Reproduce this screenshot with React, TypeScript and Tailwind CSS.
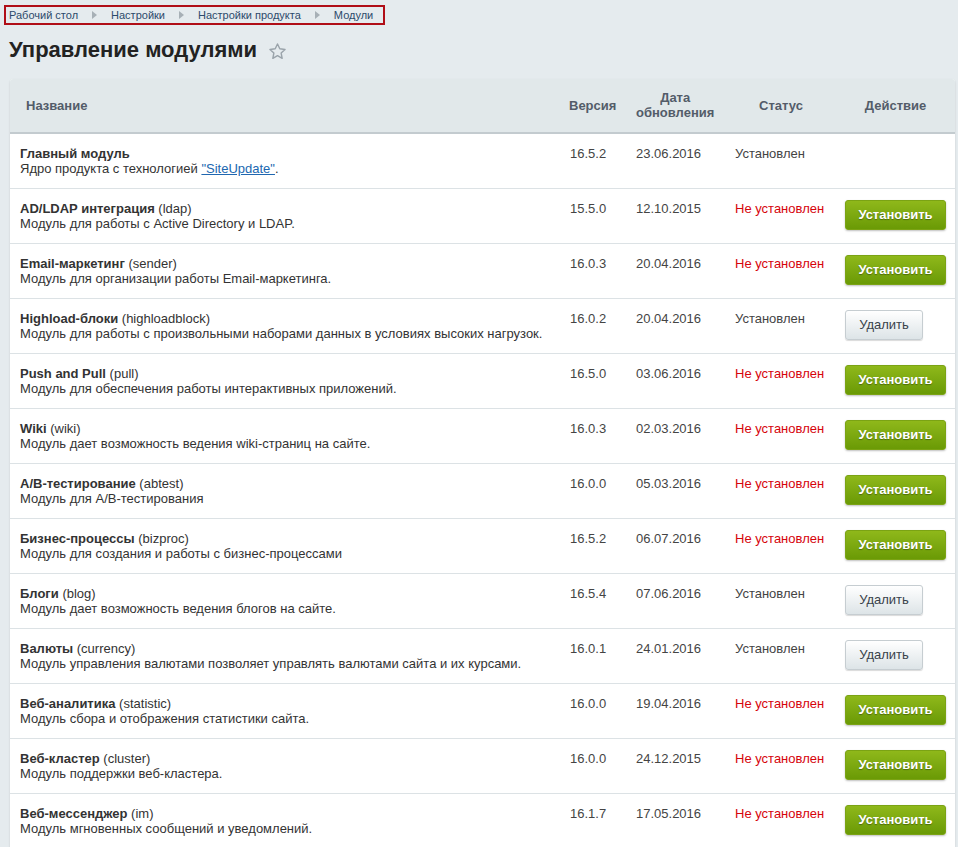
import React from 'react';

type Mod = {
  name: string;
  code?: string;
  desc: React.ReactNode;
  version: string;
  date: string;
  installed: boolean;
  action?: 'install' | 'delete' | null;
};

const modules: Mod[] = [
  {
    name: 'Главный модуль',
    desc: (
      <>
        Ядро продукта с технологией{' '}
        <a href="#" className="text-[#2067b0] underline">
          "SiteUpdate"
        </a>
        .
      </>
    ),
    version: '16.5.2',
    date: '23.06.2016',
    installed: true,
    action: null,
  },
  { name: 'AD/LDAP интеграция', code: 'ldap', desc: 'Модуль для работы с Active Directory и LDAP.', version: '15.5.0', date: '12.10.2015', installed: false, action: 'install' },
  { name: 'Email-маркетинг', code: 'sender', desc: 'Модуль для организации работы Email-маркетинга.', version: '16.0.3', date: '20.04.2016', installed: false, action: 'install' },
  { name: 'Highload-блоки', code: 'highloadblock', desc: 'Модуль для работы с произвольными наборами данных в условиях высоких нагрузок.', version: '16.0.2', date: '20.04.2016', installed: true, action: 'delete' },
  { name: 'Push and Pull', code: 'pull', desc: 'Модуль для обеспечения работы интерактивных приложений.', version: '16.5.0', date: '03.06.2016', installed: false, action: 'install' },
  { name: 'Wiki', code: 'wiki', desc: 'Модуль дает возможность ведения wiki-страниц на сайте.', version: '16.0.3', date: '02.03.2016', installed: false, action: 'install' },
  { name: 'A/B-тестирование', code: 'abtest', desc: 'Модуль для A/B-тестирования', version: '16.0.0', date: '05.03.2016', installed: false, action: 'install' },
  { name: 'Бизнес-процессы', code: 'bizproc', desc: 'Модуль для создания и работы с бизнес-процессами', version: '16.5.2', date: '06.07.2016', installed: false, action: 'install' },
  { name: 'Блоги', code: 'blog', desc: 'Модуль дает возможность ведения блогов на сайте.', version: '16.5.4', date: '07.06.2016', installed: true, action: 'delete' },
  { name: 'Валюты', code: 'currency', desc: 'Модуль управления валютами позволяет управлять валютами сайта и их курсами.', version: '16.0.1', date: '24.01.2016', installed: true, action: 'delete' },
  { name: 'Веб-аналитика', code: 'statistic', desc: 'Модуль сбора и отображения статистики сайта.', version: '16.0.0', date: '19.04.2016', installed: false, action: 'install' },
  { name: 'Веб-кластер', code: 'cluster', desc: 'Модуль поддержки веб-кластера.', version: '16.0.0', date: '24.12.2015', installed: false, action: 'install' },
  { name: 'Веб-мессенджер', code: 'im', desc: 'Модуль мгновенных сообщений и уведомлений.', version: '16.1.7', date: '17.05.2016', installed: false, action: 'install' },
];

const crumbs = ['Рабочий стол', 'Настройки', 'Настройки продукта', 'Модули'];

function Arrow() {
  return (
    <svg width="5" height="8" viewBox="0 0 5 8" className="mx-[14px]">
      <path d="M0 0 L5 4 L0 8 Z" fill="#a7b0b6" />
    </svg>
  );
}

export default function App() {
  return (
    <div className="min-h-screen bg-[#e5ebee] font-['Liberation_Sans',Arial,sans-serif] text-[13px] text-[#333] pb-10">
      {/* breadcrumbs */}
      <div className="pt-[5px] pl-[4px]">
        <div className="inline-flex items-center h-[20px] border-2 border-[#b00e17] pl-[3px] pr-[10px] text-[11px] text-[#2c4a6b]">
          {crumbs.map((c, i) => (
            <React.Fragment key={c}>
              {i > 0 && <Arrow />}
              <span>{c}</span>
            </React.Fragment>
          ))}
        </div>
      </div>

      {/* title */}
      <div className="flex items-center pl-[9px] mt-[10px] h-[30px]">
        <h1 className="text-[22px] font-bold text-[#222] leading-none">Управление модулями</h1>
        <svg width="19" height="19" viewBox="0 0 24 24" className="ml-[11px] mt-[3px]">
          <path
            d="M12 2.5l2.9 6.1 6.6.8-4.9 4.6 1.3 6.6L12 17.3l-5.9 3.3 1.3-6.6-4.9-4.6 6.6-.8z"
            fill="none"
            stroke="#9aa3aa"
            strokeWidth="1.8"
            strokeLinejoin="round"
          />
        </svg>
      </div>

      {/* table */}
      <div className="ml-[10px] mt-[14px] w-[945px] bg-white rounded-t-[3px] shadow-[0_1px_2px_rgba(0,0,0,0.15)] overflow-hidden">
        <table className="w-full border-collapse table-fixed">
          <colgroup>
            <col className="w-[550px]" />
            <col className="w-[66px]" />
            <col className="w-[100px]" />
            <col className="w-[110px]" />
            <col className="w-[119px]" />
          </colgroup>
          <thead>
            <tr className="h-[54px] bg-[#e1e8ea] border-b-2 border-[#c3cbcf] text-[#535c69] font-bold">
              <th className="text-left font-bold pl-[16px]">Название</th>
              <th className="text-left font-bold pl-[9px]">Версия</th>
              <th className="text-left font-bold pl-[10px]">
                <span className="inline-block text-center leading-[15px]">
                  Дата
                  <br />
                  обновления
                </span>
              </th>
              <th className="text-center font-bold">Статус</th>
              <th className="text-center font-bold">Действие</th>
            </tr>
          </thead>
          <tbody>
            {modules.map((m) => (
              <tr key={m.name} className="h-[55px] border-b border-[#dce2e5] align-top leading-[15px]">
                <td className="pl-[10px] pt-[12px]">
                  <div>
                    <span className="font-bold text-[#333]">{m.name}</span>
                    {m.code && <span className="text-[#333]"> ({m.code})</span>}
                  </div>
                  <div className="text-[#333]">{m.desc}</div>
                </td>
                <td className="pl-[10px] pt-[12px] text-[#444]">{m.version}</td>
                <td className="pl-[10px] pt-[12px] text-[#444]">{m.date}</td>
                <td className={`pl-[9px] pt-[12px] ${m.installed ? 'text-[#444]' : 'text-[#d6040c]'}`}>
                  {m.installed ? 'Установлен' : 'Не установлен'}
                </td>
                <td className="pl-[9px] pt-[11px]">
                  {m.action === 'install' && (
                    <button className="w-[101px] h-[30px] rounded-[3px] bg-gradient-to-b from-[#8fb81a] to-[#6a9a05] border border-[#7ba314] shadow-[0_1px_2px_rgba(0,0,0,0.25)] text-white font-bold text-[13px] [text-shadow:0_1px_1px_rgba(0,0,0,0.35)]">
                      Установить
                    </button>
                  )}
                  {m.action === 'delete' && (
                    <button className="w-[78px] h-[30px] rounded-[3px] bg-gradient-to-b from-[#ffffff] to-[#dde4e7] border border-[#c6cdd1] shadow-[0_1px_1px_rgba(0,0,0,0.15)] text-[#39424a] text-[13px]">
                      Удалить
                    </button>
                  )}
                </td>
              </tr>
            ))}
          </tbody>
        </table>
      </div>
    </div>
  );
}
